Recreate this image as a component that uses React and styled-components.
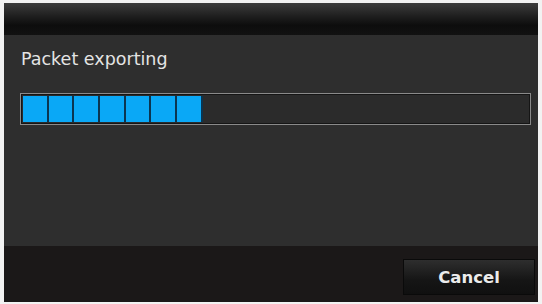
import React from "react";
import styled, { createGlobalStyle } from "styled-components";

const GlobalStyle = createGlobalStyle`
  html, body {
    margin: 0;
    padding: 0;
    background: #f2f2f2;
    font-family: "DejaVu Sans", "Liberation Sans", sans-serif;
  }
`;

const Frame = styled.div`
  width: 542px;
  height: 304px;
  padding: 3px 4px 2px 4px;
  box-sizing: border-box;
`;

const Dialog = styled.div`
  height: 100%;
  display: flex;
  flex-direction: column;
  background: #2e2e2e;
`;

const TitleBar = styled.div`
  height: 32px;
  background: linear-gradient(#3c3c3c 0%, #1c1c1c 45%, #0d0d0d 70%, #121212 100%);
`;

const Body = styled.div`
  flex: 1;
  padding: 13px 7px 0 16px;
  display: flex;
  flex-direction: column;
`;

const Label = styled.div`
  color: #e4e4e4;
  font-size: 17.5px;
  line-height: 22px;
  margin-left: 1px;
`;

const Track = styled.div`
  margin-top: 23px;
  height: 32px;
  box-sizing: border-box;
  border: 1px solid #8a8a8a;
  box-shadow: inset 0 0 0 1px #151515;
  background: #2b2b2b;
  display: flex;
  padding: 2px 2px;
`;

const Segment = styled.div`
  width: 25.7px;
  height: 100%;
  box-sizing: border-box;
  background: #0aa8f6;
  border-right: 2px solid #0b3550;
`;

const Footer = styled.div`
  height: 56px;
  background: #1b1818;
  display: flex;
  justify-content: flex-end;
  align-items: flex-start;
  padding: 13px 3px 0 0;
  box-sizing: border-box;
`;

const Button = styled.button`
  width: 132px;
  height: 36px;
  border: 1px solid #0a0a0a;
  background: linear-gradient(#2e2e2e, #151515 60%, #101010);
  color: #ececec;
  font-family: "DejaVu Sans", "Liberation Sans", sans-serif;
  font-size: 16.5px;
  font-weight: bold;
  padding: 0;
`;

export default function App() {
  const done = 7;
  return (
    <Frame>
      <GlobalStyle />
      <Dialog>
        <TitleBar />
        <Body>
          <Label>Packet exporting</Label>
          <Track>
            {Array.from({ length: done }).map((_, i) => (
              <Segment key={i} />
            ))}
          </Track>
        </Body>
        <Footer>
          <Button>Cancel</Button>
        </Footer>
      </Dialog>
    </Frame>
  );
}
